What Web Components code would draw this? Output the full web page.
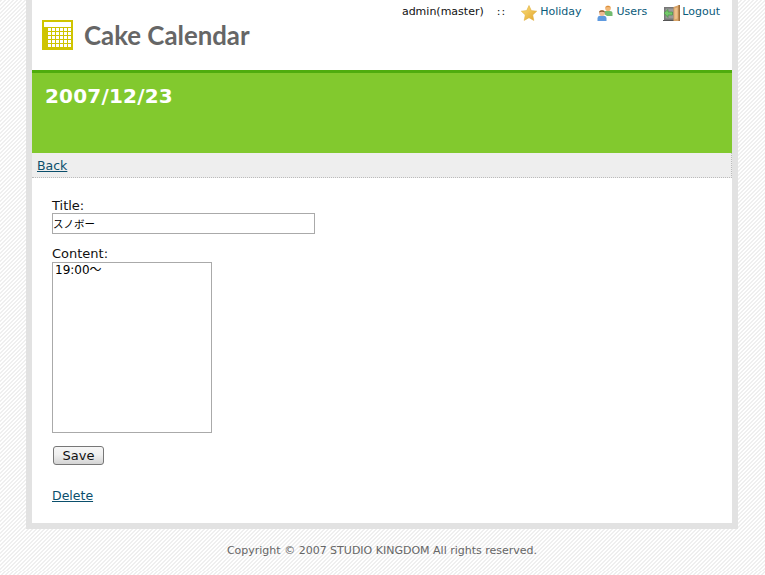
<!DOCTYPE html>
<html>
<head>
<meta charset="utf-8">
<title>Cake Calendar</title>
<style>
  html, body { margin: 0; padding: 0; }
  body {
    background-color: #fff;
    background-image: repeating-linear-gradient(135deg, #efefef 0, #efefef 1.5px, #fff 1.5px, #fff 2.83px);
    font-family: "DejaVu Sans", Verdana, sans-serif;
    font-size: 13px;
    color: #111;
  }
</style>
</head>
<body>
<cake-page>
  <cake-header slot="header"></cake-header>
  <cake-band slot="band">2007/12/23</cake-band>
  <cake-nav slot="nav"><a href="#">Back</a></cake-nav>
  <event-form slot="main"></event-form>
  <span slot="footer">Copyright © 2007 STUDIO KINGDOM All rights reserved.</span>
</cake-page>

<script>
class CakePage extends HTMLElement {
  constructor() {
    super();
    this.attachShadow({ mode: "open" });
  }

  connectedCallback() {
    this.shadowRoot.innerHTML = /* html */`
    <style>
      :host { display: block; width: 712px; margin-left: 26px; }
      .frame { background: #fff; border: 6px solid #e2e2e2; border-top: 0; }
      .footer {
        height: 42px;
        display: flex;
        justify-content: center;
        align-items: center;
        font-size: 11px;
        color: #666;
      }
    </style>
    <div class="frame">
      <slot name="header"></slot>
      <slot name="band"></slot>
      <slot name="nav"></slot>
      <slot name="main"></slot>
    </div>
    <div class="footer"><slot name="footer"></slot></div>`;
  }
}

class CakeHeader extends HTMLElement {
  constructor() {
    super();
    this.attachShadow({ mode: "open" });
  }

  connectedCallback() {
    this.shadowRoot.innerHTML = /* html */`
    <style>
      :host { display: flex; justify-content: space-between; height: 70px; }
      .logo { display: flex; align-items: center; gap: 11px; padding-left: 10px; }
      .logo svg { flex: none; }
      .logo span {
        font: 700 25.800px Lato, sans-serif;
        color: #666;
      }
      .menu {
        display: flex;
        align-items: flex-start;
        gap: 16px;
        padding: 5px 12px 0 0;
        font-size: 11px;
        line-height: 14px;
        color: #111;
      }
      .menu a { display: flex; align-items: flex-start; gap: 3px; color: #0b5a7a; text-decoration: none; }
      .menu a.users { gap: 4px; margin-left: -1px; }
      .menu a.out { gap: 2px; }
      .menu svg { flex: none; }
      .sep { margin-left: 13px; letter-spacing: 1px; }
      .who { display: flex; margin-right: -1px; }
    </style>
    <div class="logo">
      <svg width="31" height="30" viewBox="0 0 31 30" shape-rendering="crispEdges">
        <rect width="31" height="30" fill="#cfc400"/>
        <rect x="2" y="2" width="27" height="5" fill="#fff"/>
        <path fill="#fff" d="M6 8h3v3H6zM10 8h3v3h-3zM14 8h3v3h-3zM18 8h3v3h-3zM22 8h3v3h-3zM26 8h3v3h-3z
          M6 12h3v3H6zM10 12h3v3h-3zM14 12h3v3h-3zM18 12h3v3h-3zM22 12h3v3h-3zM26 12h3v3h-3z
          M6 16h3v3H6zM10 16h3v3h-3zM14 16h3v3h-3zM18 16h3v3h-3zM22 16h3v3h-3zM26 16h3v3h-3z
          M6 20h3v3H6zM10 20h3v3h-3zM14 20h3v3h-3zM18 20h3v3h-3zM22 20h3v3h-3zM26 20h3v3h-3z
          M6 24h3v3H6zM10 24h3v3h-3zM14 24h3v3h-3zM18 24h3v3h-3zM22 24h3v3h-3zM26 24h3v3h-3z"/>
      </svg>
      <span>Cake Calendar</span>
    </div>
    <div class="menu">
      <div class="who">admin(master)<span class="sep">::</span></div>
      <a href="#">
        <svg width="16" height="16" viewBox="0 0 16 16">
          <defs>
            <linearGradient id="star" x1="0" y1="0" x2="1" y2="1">
              <stop offset="0" stop-color="#fbe27c"/>
              <stop offset="1" stop-color="#e2a32c"/>
            </linearGradient>
          </defs>
          <path d="M8 .5l2.300 5.100 5.400.6-4 3.700 1.100 5.500L8 12.700l-4.800 2.700 1.100-5.500-4-3.700 5.400-.6z" fill="url(#star)" stroke="#e0b040" stroke-width=".6"/>
        </svg>Holiday</a>
      <a class="users" href="#">
        <svg width="16" height="16" viewBox="0 0 16 16">
          <path d="M7 9V7.500C7 6.500 8 6 9 6h4c1.500 0 2.500.8 2.500 2v3H10z" fill="#72bb70"/>
          <circle cx="11" cy="3.200" r="2.800" fill="#f2b878"/>
          <path d="M8.300 2.600C8.600.4 13.400.4 13.700 2.600 12 1.700 10 1.700 8.300 2.600z" fill="#d98f3c"/>
          <path d="M.5 16v-2.500C.5 11.500 2 10.800 3 10.800h4c1.200 0 2.500.8 2.500 2.700V16z" fill="#5f9ae0"/>
          <circle cx="5" cy="8" r="2.900" fill="#f0bb94"/>
          <path d="M2 7.500C2.200 4.600 7.800 4.600 8 7.500 6.300 6.600 3.700 6.600 2 7.500z" fill="#8a5a30"/>
        </svg>Users</a>
      <a class="out" href="#">
        <svg width="17" height="16" viewBox="0 0 17 16">
          <rect x="1" y="2" width="10" height="13" fill="#777"/>
          <rect x="2.500" y="3.500" width="8" height="10" fill="#999"/>
          <path d="M0 15h11v1H0z" fill="#555"/>
          <path d="M10.500 2L16 0v16h-5.500z" fill="#d8a468"/>
          <path d="M15.500 0H17v16h-1.500z" fill="#a06e3a"/>
          <path d="M11.500 3.500l3-1v11l-3 1z" fill="#eec08a"/>
          <path d="M1 8l4-3.500V7h4.500v3H5v2.500z" fill="#74c86a" stroke="#3f9040" stroke-width=".6"/>
        </svg>Logout</a>
    </div>`;
  }
}

class CakeBand extends HTMLElement {
  constructor() {
    super();
    this.attachShadow({ mode: "open" });
  }

  connectedCallback() {
    this.shadowRoot.innerHTML = /* html */`
    <style>
      :host {
        display: block;
        height: 80px;
        box-sizing: content-box;
        background: #82c92e;
        border-top: 3px solid #4fac0e;
        padding: 0 13px;
        color: #fff;
        font-size: 20px;
        letter-spacing: .2px;
        font-weight: 700;
        line-height: 47px;
      }
    </style>
    <slot></slot>`;
  }
}

class CakeNav extends HTMLElement {
  constructor() {
    super();
    this.attachShadow({ mode: "open" });
  }

  connectedCallback() {
    this.shadowRoot.innerHTML = /* html */`
    <style>
      :host {
        display: flex;
        align-items: center;
        box-sizing: border-box;
        height: 25px;
        padding: 0 5px;
        background: #eee;
        border-bottom: 1px dotted #bbb;
        border-right: 1px dotted #bbb;
        font-size: 12.500px;
      }
      ::slotted(a) { color: #0b4f6c; }
    </style>
    <slot></slot>`;
  }
}

class EventForm extends HTMLElement {
  constructor() {
    super();
    this.attachShadow({ mode: "open" });
  }

  connectedCallback() {
    this.shadowRoot.innerHTML = /* html */`
    <style>
      :host { display: block; height: 345px; padding: 20px 20px 0; box-sizing: border-box; }
      label { display: block; line-height: 15px; }
      label.content { margin-bottom: 1px; }
      input, textarea {
        display: block;
        box-sizing: border-box;
        margin: 0;
        border: 1px solid #aaa;
        background: #fff;
        color: #000;
        font: 12px "DejaVu Sans", "Noto Sans CJK JP", sans-serif;
        outline: 0;
      }
      input { width: 263px; height: 21px; padding: 0; margin-bottom: 12px; font-size: 10.500px; }
      textarea { width: 160px; height: 171px; padding: 0 2px; line-height: 14px; resize: none; overflow: hidden; }
      button {
        display: block;
        box-sizing: border-box;
        width: 51px;
        height: 19px;
        margin: 13px 0 0 1px;
        padding: 0;
        border: 1px solid #777;
        border-radius: 3px;
        background: linear-gradient(#f6f6f6 0%, #f0f0f0 45%, #d4d4d4 100%);
        color: #111;
        font: 13px "DejaVu Sans", sans-serif;
      }
      a { display: inline-block; margin-top: 23px; color: #0b4f6c; font-size: 12.500px; }
    </style>
    <label for="t">Title:</label>
    <input id="t" value="スノボー">
    <label class="content" for="c">Content:</label>
    <textarea id="c">19:00～</textarea>
    <button>Save</button>
    <a href="#">Delete</a>`;
  }
}

customElements.define("cake-page", CakePage);
customElements.define("cake-header", CakeHeader);
customElements.define("cake-band", CakeBand);
customElements.define("cake-nav", CakeNav);
customElements.define("event-form", EventForm);
</script>
</body>
</html>
